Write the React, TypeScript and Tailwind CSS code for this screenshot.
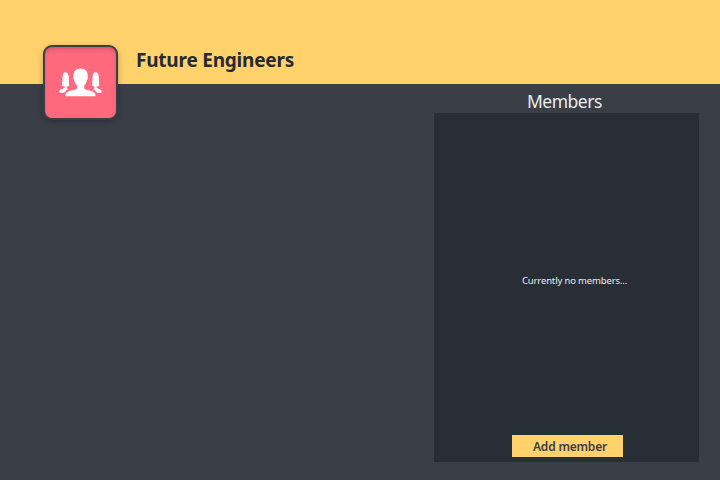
function GroupIcon() {
  return (
    <svg width="44" height="30" viewBox="0 0 44 30" fill="#fff" aria-hidden="true">
      <path d="M21.6 .6C16.6 .6 14.4 3.6 14.6 8.2C14.1 9 14.3 11.2 15.2 11.8C15.7 14.8 16.8 16.4 18 17.6V20.2C17.4 22.2 8.7 22 6.8 25.6L6.2 28.2H36.6L36.1 25.6C34 22 25.9 22.2 25.2 20.2V17.6C26.6 16.4 27.6 14.8 28 11.8C28.9 11.2 29.1 9 28.6 8.2C28.8 3.6 26.6 .6 21.6 .6Z" />
      <path d="M6.6 4.2C4.6 4.2 3.8 6 3.6 8.7C3.2 12.2 3.4 15.2 3 17.6C3.8 18.4 5 18.5 5.8 18.6V19.6C5 21 .8 21 .4 22.9V24.8H5.2C6 23.4 7.4 22.4 9 21.3L7.8 20.2V18.6C8.6 18.5 9.6 18.4 10.2 17.6C9.8 15.2 10 12.2 9.7 8.7C9.5 6 8.6 4.2 6.6 4.2Z" />
      <path d="M36.7 4.2C38.7 4.2 39.5 6 39.7 8.7C40.1 12.2 39.9 15.2 40.3 17.6C39.5 18.4 38.5 18.5 37.6 18.6V19.6C38.4 21 42 21 42.5 22.9V24.8H38C37.2 23.4 35.8 22.4 34.2 21.3L35.5 20.2V18.6C34.7 18.5 33.7 18.4 33.1 17.6C33.5 15.2 33.3 12.2 33.6 8.7C33.8 6 34.7 4.2 36.7 4.2Z" />
    </svg>
  );
}

export default function App() {
  return (
    <div className="flex h-[480px] w-[720px] flex-col overflow-hidden bg-[#3a3e47] font-['Noto_Sans','Open_Sans',sans-serif]">
      <header className="flex h-[84px] shrink-0 items-start bg-[#ffd26b] pl-[43px]">
        <div className="mt-[45px] flex h-[75px] w-[75px] shrink-0 items-center justify-center rounded-[9px] border-2 border-[#3a3e47] bg-[#ff697d] shadow-[0_2px_6px_rgba(0,0,0,0.25),inset_0_3px_4px_-1px_rgba(70,30,50,0.25)]">
          <GroupIcon />
        </div>
        <h1 className="ml-[18px] mt-[46px] whitespace-nowrap text-[19px] font-bold leading-7 tracking-[-0.22px] text-[#252a34]">
          Future Engineers
        </h1>
      </header>
      <main className="flex flex-1 justify-end pr-[21px]">
        <section className="flex w-[265px] flex-col">
          <h2 className="h-[29px] whitespace-nowrap pl-[93px] pt-[3px] text-[17.5px] leading-7 tracking-[-0.5px] text-[#ebecee]">
            Members
          </h2>
          <div className="flex h-[349px] flex-col bg-[#282e36]">
            <p className="mt-[160px] whitespace-nowrap pl-[88px] text-[9.5px] leading-4 tracking-[-0.15px] text-[#ebecee]">
              Currently no members...
            </p>
            <button className="ml-[78px] mt-auto mb-[5px] h-[22px] w-[111px] whitespace-nowrap bg-[#ffd26b] pl-[21px] pt-px text-left text-[12px] font-semibold leading-[22px] tracking-[-0.2px] text-[#3a3e47]">
              Add member
            </button>
          </div>
        </section>
      </main>
    </div>
  );
}
